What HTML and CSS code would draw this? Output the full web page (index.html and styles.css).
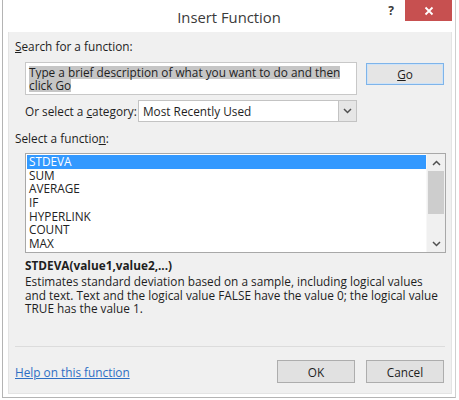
FILE: index.html
```html
<!DOCTYPE html>
<html>
<head>
<meta charset="utf-8">
<link rel="stylesheet" href="styles.css">
</head>
<body>
<div class="window">
  <div class="titlebar">
    <div></div>
    <div class="title">Insert Function</div>
    <div class="controls">
      <span class="help">?</span>
      <span class="close"><svg width="10" height="10" viewBox="0 0 10 10"><path d="M1.5 1.5 L8.5 8.5 M8.5 1.5 L1.5 8.5" stroke="#fff" stroke-width="1.8" fill="none"/></svg></span>
    </div>
  </div>
  <div class="client">
    <div class="label first"><u>S</u>earch for a function:</div>
    <div class="search-row">
      <div class="searchbox"><span class="sel">Type a brief description of what you want to do and then</span><span class="sel">click Go</span></div>
      <div class="btn go"><u>G</u>o</div>
    </div>
    <div class="cat-row">
      <span class="cat-label">Or select a <u>c</u>ategory:</span>
      <div class="select">
        <span class="select-text">Most Recently Used</span>
        <span class="select-arrow"><svg width="9" height="6" viewBox="0 0 9 6"><path d="M1 1 L4.5 4.5 L8 1" stroke="#505050" stroke-width="1.5" fill="none"/></svg></span>
      </div>
    </div>
    <div class="label fn">Select a functio<u>n</u>:</div>
    <div class="listbox">
      <ul class="items">
        <li class="selected">STDEVA</li>
        <li>SUM</li>
        <li>AVERAGE</li>
        <li>IF</li>
        <li>HYPERLINK</li>
        <li>COUNT</li>
        <li>MAX</li>
      </ul>
      <div class="scrollbar">
        <span class="arrow"><svg width="9" height="6" viewBox="0 0 9 6"><path d="M1 5 L4.5 1.5 L8 5" stroke="#505050" stroke-width="1.5" fill="none"/></svg></span>
        <span class="track"><span class="thumb"></span></span>
        <span class="arrow"><svg width="9" height="6" viewBox="0 0 9 6"><path d="M1 1 L4.5 4.5 L8 1" stroke="#505050" stroke-width="1.5" fill="none"/></svg></span>
      </div>
    </div>
    <div class="signature">STDEVA(value1,value2,...)</div>
    <div class="desc">
      <div>Estimates standard deviation based on a sample, including logical values</div>
      <div>and text. Text and the logical value FALSE have the value 0; the logical value</div>
      <div>TRUE has the value 1.</div>
    </div>
    <div class="spacer"></div>
    <div class="separator"></div>
    <div class="footer">
      <a class="link" href="#">Help on this function</a>
      <div class="buttons">
        <div class="btn">OK</div>
        <div class="btn">Cancel</div>
      </div>
    </div>
  </div>
</div>
</body>
</html>
```
FILE: styles.css
```css
html, body {
  margin: 0;
  padding: 0;
}
body {
  width: 459px;
  height: 400px;
  overflow: hidden;
  background: #ffffff;
  font-family: "Open Sans", "Noto Sans", sans-serif;
  font-size: 11.8px;
  color: #1e1e1e;
}
u { text-decoration: underline; text-underline-offset: 1px; }
.window {
  margin-left: 2px;
  width: 454px;
  height: 398px;
  box-sizing: border-box;
  border-left: 1px solid #b4b4b4;
  border-right: 1px solid #cfcfcf;
  border-bottom: 1px solid #b4b4b4;
  display: flex;
  flex-direction: column;
}
.titlebar {
  height: 32px;
  display: grid;
  grid-template-columns: 1fr auto 1fr;
  align-items: start;
}
.title {
  font-size: 14.8px;
  color: #3a3a3a;
  line-height: 20px;
  margin-top: 7px;
}
.controls {
  display: flex;
  justify-content: flex-end;
  align-items: flex-start;
  margin-right: 3px;
}
.help {
  font-weight: bold;
  font-size: 12px;
  line-height: 14px;
  color: #3a3a3a;
  margin-top: 4px;
  margin-right: 11px;
}
.close {
  width: 47px;
  height: 21px;
  background: #c75050;
  display: flex;
  align-items: center;
  justify-content: center;
}
.client {
  flex: 1;
  margin: 0 3px 3px 5px;
  background: #f0f0f0;
  border: 1px solid #e4e4e4;
  border-top: 0;
  display: flex;
  flex-direction: column;
}
.label {
  line-height: 15px;
  margin-left: 6px;
}
.label.first { margin-top: 7px; }
.search-row {
  display: flex;
  margin-top: 8px;
  margin-left: 16px;
}
.searchbox {
  width: 332px;
  height: 33px;
  box-sizing: border-box;
  background: #fff;
  border: 1px solid #c8c8c8;
  padding: 3px 0 0 3px;
  white-space: nowrap;
  display: flex;
  flex-direction: column;
  align-items: flex-start;
}
.sel {
  display: block;
  background: #c6c6c6;
  line-height: 13px;
  height: 13px;
}
.btn {
  box-sizing: border-box;
  width: 78px;
  height: 23px;
  border: 1px solid #adadad;
  background: #e1e1e1;
  display: flex;
  align-items: center;
  justify-content: center;
}
.btn.go {
  margin-left: 9px;
  margin-top: 1px;
  height: 22px;
  border-color: #7eb4ea;
  background: #e5e5e5;
  box-shadow: inset 0 0 0 1px #cfe3f7;
}
.cat-row {
  display: flex;
  align-items: center;
  margin-top: 5px;
  margin-left: 16px;
}
.cat-label { width: 113px; }
.select {
  width: 219px;
  height: 22px;
  box-sizing: border-box;
  background: #fff;
  border: 1px solid #c3c3c3;
  display: flex;
  align-items: center;
  justify-content: space-between;
}
.select-text { margin-left: 4px; }
.select-arrow {
  width: 18px;
  height: 20px;
  box-sizing: border-box;
  background: #e6e6e6;
  border-left: 1px solid #c3c3c3;
  display: flex;
  align-items: center;
  justify-content: center;
}
.label.fn { margin-top: 9px; }
.listbox {
  margin-top: 7px;
  margin-left: 16px;
  width: 421px;
  height: 100px;
  box-sizing: border-box;
  border: 1px solid #a8a8a8;
  background: #fff;
  display: flex;
  padding: 1px 0 0 1px;
}
.items {
  list-style: none;
  margin: 0;
  padding: 0;
  flex: 1;
}
.items li {
  height: 13.7px;
  line-height: 13.7px;
  padding-left: 2px;
  color: #222;
}
.items li.selected {
  background: #3399ff;
  color: #fff;
}
.scrollbar {
  width: 18px;
  margin-top: -1px;
  background: #f0f0f0;
  display: flex;
  flex-direction: column;
  border-left: 1px solid #f7f7f7;
}
.scrollbar .arrow {
  height: 17px;
  display: flex;
  align-items: center;
  justify-content: center;
}
.track {
  flex: 1;
  display: flex;
  flex-direction: column;
  padding: 0 1px;
}
.thumb {
  height: 43px;
  background: #cdcdcd;
}
.signature {
  font-weight: bold;
  line-height: 15px;
  margin-top: 5px;
  margin-left: 16px;
}
.desc {
  margin-top: 2px;
  margin-left: 16px;
  line-height: 13.6px;
  white-space: nowrap;
}
.spacer { flex: 1; }
.separator {
  height: 1px;
  background: #dcdcdc;
  margin: 0 6px 0 6px;
}
.footer {
  display: flex;
  align-items: center;
  justify-content: space-between;
  margin: 13px 7px 10px 6px;
}
.link {
  color: #2e6fc4;
  text-decoration: underline;
}
.buttons {
  display: flex;
  gap: 11px;
}
.buttons .btn { width: 78px; }
```
